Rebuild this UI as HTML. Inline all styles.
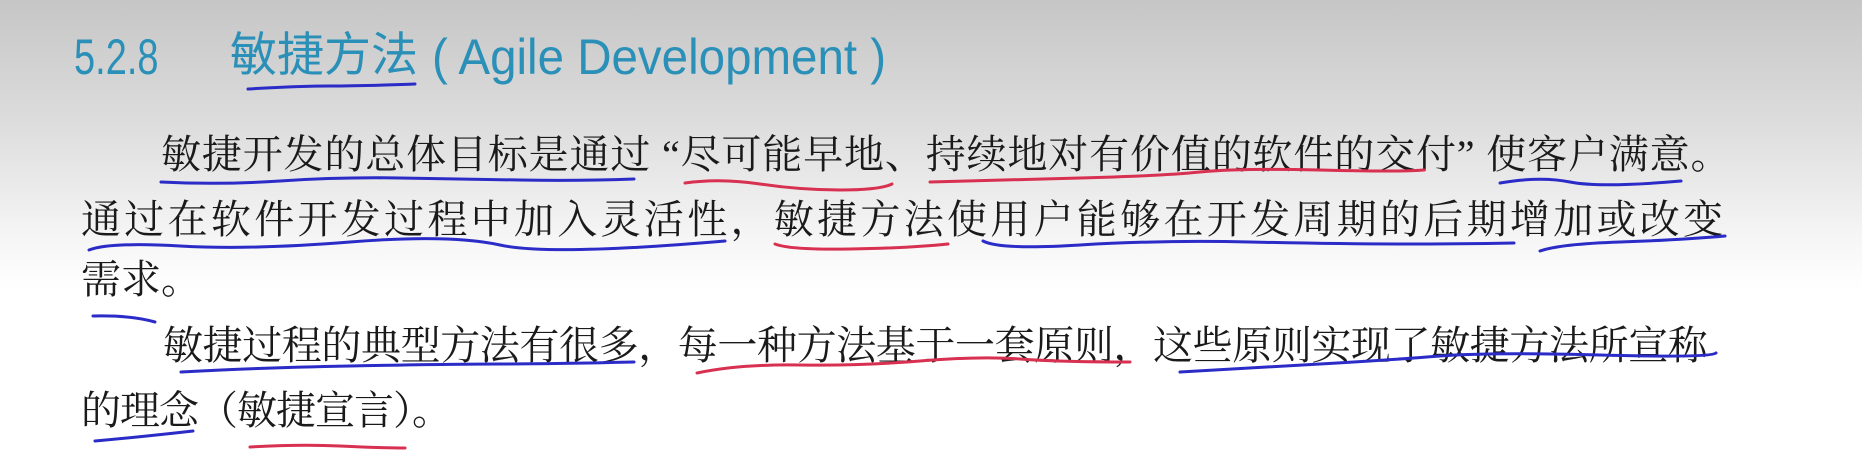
<!DOCTYPE html>
<html><head><meta charset="utf-8"><style>
html,body{margin:0;padding:0}
body{width:1862px;height:450px;overflow:hidden;position:relative;background:linear-gradient(#c6c6c6 0px,#dcdcdc 120px,#f6f6f6 240px,#fff 290px,#fff 450px);}
.t{position:absolute;white-space:nowrap;font-family:"Liberation Serif","Noto Serif CJK SC",serif;font-size:40px;color:#1a1a1a;line-height:1}
.h{position:absolute;white-space:nowrap;font-family:"Liberation Sans","Noto Sans CJK SC",sans-serif;color:#2a90b8;font-size:50px;line-height:1;transform-origin:0 0}
svg{position:absolute;left:0;top:0}
</style></head><body>
<div class="h" style="left:74px;top:32px;transform:scaleX(0.76)">5.2.8</div>
<div class="h" style="left:230px;top:31px;font-size:47px">敏捷方法</div>
<div class="h" style="left:432px;top:32px;transform:scaleX(0.95)">( Agile Development )</div>

<div class="t" style="left:161px;top:135px;letter-spacing:0.85px">敏捷开发的总体目标是通过 “尽可能早地、持续地对有价值的软件的交付” 使客户满意。</div>
<div class="t" style="left:81px;top:200px;letter-spacing:3.3px">通过在软件开发过程中加入灵活性，敏捷方法使用户能够在开发周期的后期增加或改变</div>
<div class="t" style="left:81px;top:260px">需求。</div>
<div class="t" style="left:163px;top:326px;letter-spacing:-0.4px">敏捷过程的典型方法有很多，每一种方法基于一套原则，这些原则实现了敏捷方法所宣称</div>
<div class="t" style="left:81px;top:391px;letter-spacing:-1px">的理念（敏捷宣言）。</div>

<svg width="1862" height="450" fill="none" stroke-width="3" stroke-linecap="round">
<g stroke="#2b2bc8">
<path d="M248 89 Q300 86 330 86 T415 84"/>
<path d="M161 182 Q220 185 280 181 T400 178 T520 180 T634 179"/>
<path d="M1500 183 Q1540 176 1570 182 T1681 181"/>
<path d="M89 250 Q110 242 180 246 T350 242 T500 245 T725 241"/>
<path d="M983 241 Q1000 250 1080 245 T1250 242 T1400 244 T1514 243"/>
<path d="M1540 251 Q1560 244 1620 242 T1725 236"/>
<path d="M93 316 Q130 315 155 322"/>
<path d="M181 372 Q250 368 350 366 T500 364 T634 362"/>
<path d="M1180 372 Q1250 368 1320 364 T1440 356 T1600 355 T1716 353"/>
<path d="M95 441 Q140 437 193 431"/>
</g>
<g stroke="#d83050">
<path d="M685 183 Q720 178 760 184 T840 190 T892 184"/>
<path d="M930 182 Q1000 180 1080 178 T1200 172 T1320 170 T1424 170"/>
<path d="M775 244 Q790 250 850 249 T948 244"/>
<path d="M697 373 Q740 364 800 365 T920 361 T1020 359 T1130 362"/>
<path d="M250 447 Q300 444 340 446 T405 448"/>
</g>
</svg>
</body></html>
